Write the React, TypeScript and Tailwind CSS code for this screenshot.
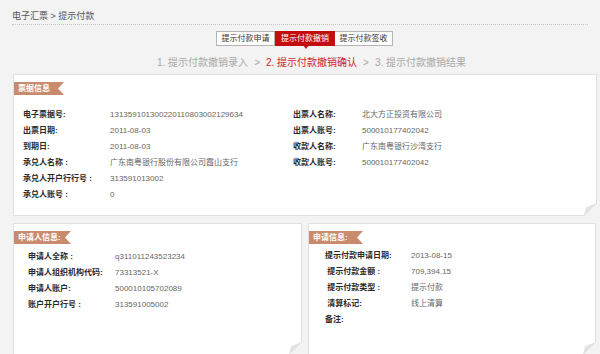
import type { ReactNode } from "react";

const font = "font-['Liberation_Sans','Noto_Sans_CJK_SC',sans-serif]";

function Curl() {
  return (
    <svg width="13" height="13" viewBox="0 0 13 13" className="absolute right-[-1px] bottom-[-1px]">
      <defs>
        <linearGradient id="fold" x1="0" y1="0" x2="1" y2="1">
          <stop offset="0" stopColor="#fafafa" />
          <stop offset="0.6" stopColor="#d6d6d6" />
          <stop offset="1" stopColor="#b8b8b8" />
        </linearGradient>
      </defs>
      <polygon points="13,0 13,13 0,13" fill="#f3f3f3" />
      <polygon points="13,0 0,13 2,4" fill="url(#fold)" />
    </svg>
  );
}

function Ribbon({ children, w }: { children: ReactNode; w: string }) {
  return (
    <div
      className={`${w} h-[13px] bg-[#c98b6d] pl-[4px] text-[8px] leading-[13px] font-bold text-white [clip-path:polygon(0_0,100%_0,calc(100%-6px)_50%,100%_100%,0_100%)]`}
    >
      {children}
    </div>
  );
}

function Row({ label, value, lw }: { label: string; value?: string; lw: string }) {
  return (
    <div className="flex h-[16px] items-center text-[8px] leading-[16px]">
      <span className={`${lw} shrink-0 whitespace-pre font-semibold text-[#2a2a2a]`}>{label}</span>
      <span className="text-[#666]">{value}</span>
    </div>
  );
}

export default function App() {
  return (
    <div className={`w-[600px] h-[354px] overflow-hidden bg-[#f3f3f3] ${font}`}>
      <div className="mx-[12px] h-[25px] border-b border-dotted border-[#c8c8c8] pt-[11px] text-[9px] leading-[10px] text-[#555]">
        电子汇票 &gt; 提示付款
      </div>

      <div className="mt-[6px] ml-[216px] flex h-[15px] text-[8px] leading-[13px]">
        <div className="w-[59px] border border-[#b5b5b5] bg-white text-center text-[#333]">提示付款申请</div>
        <div className="relative w-[60px] border border-[#c40d0d] bg-[#c40d0d] text-center text-white">
          提示付款撤销
          <span className="absolute left-[27px] top-[13px] h-0 w-0 border-x-[3px] border-t-[4px] border-x-transparent border-t-[#c40d0d]" />
        </div>
        <div className="w-[58px] border border-l-0 border-[#b5b5b5] bg-white text-center text-[#333]">提示付款签收</div>
      </div>

      <div className="mt-[11px] ml-[157px] flex gap-[6px] text-[10px] leading-[12px] text-[#a8a8a8]">
        <span>1. 提示付款撤销录入</span>
        <span>&gt;</span>
        <span className="text-[#d0232a]">2. 提示付款撤销确认</span>
        <span>&gt;</span>
        <span>3. 提示付款撤销结果</span>
      </div>

      <div className="relative mt-[5px] ml-[13px] h-[142px] w-[584px] border border-[#e0e0e0] bg-white pt-[7px]">
        <Ribbon w="w-[50px]">票据信息</Ribbon>
        <div className="mt-[12px] flex pl-[9px]">
          <div className="w-[270px]">
            <Row lw="w-[87px]" label="电子票据号:" value="131359101300220110803002129634" />
            <Row lw="w-[87px]" label="出票日期:" value="2011-08-03" />
            <Row lw="w-[87px]" label="到期日:" value="2011-08-03" />
            <Row lw="w-[87px]" label="承兑人名称 :" value="广东南粤银行股份有限公司霞山支行" />
            <Row lw="w-[87px]" label="承兑人开户行行号 :" value="313591013002" />
            <Row lw="w-[87px]" label="承兑人账号 :" value="0" />
          </div>
          <div>
            <Row lw="w-[69px]" label="出票人名称:" value="北大方正投资有限公司" />
            <Row lw="w-[69px]" label="出票人账号:" value="500010177402042" />
            <Row lw="w-[69px]" label="收款人名称:" value="广东南粤银行沙湾支行" />
            <Row lw="w-[69px]" label="收款人账号:" value="500010177402042" />
          </div>
        </div>
        <Curl />
      </div>

      <div className="mt-[7px] ml-[13px] flex gap-[6px]">
        <div className="relative h-[132px] w-[289px] border border-[#e0e0e0] bg-white pt-[7px]">
          <Ribbon w="w-[57px]">申请人信息:</Ribbon>
          <div className="mt-[5px] pl-[14px]">
            <Row lw="w-[87px]" label="申请人全称 :" value="q311011243523234" />
            <Row lw="w-[87px]" label="申请人组织机构代码:" value="73313521-X" />
            <Row lw="w-[87px]" label="申请人账户:" value="500010105702089" />
            <Row lw="w-[87px]" label="账户开户行号 :" value="313591005002" />
          </div>
          <Curl />
        </div>
        <div className="relative h-[132px] w-[288px] border border-[#e0e0e0] bg-white pt-[7px]">
          <Ribbon w="w-[54px]">申请信息:</Ribbon>
          <div className="mt-[4px] pl-[16px]">
            <Row lw="w-[86px]" label="提示付款申请日期:" value="2013-08-15" />
            <Row lw="w-[86px]" label=" 提示付款金额 :" value="709,394.15" />
            <Row lw="w-[86px]" label=" 提示付款类型 :" value="提示付款" />
            <Row lw="w-[86px]" label=" 清算标记:" value="线上清算" />
            <Row lw="w-[86px]" label="备注:" />
          </div>
          <Curl />
        </div>
      </div>
    </div>
  );
}
